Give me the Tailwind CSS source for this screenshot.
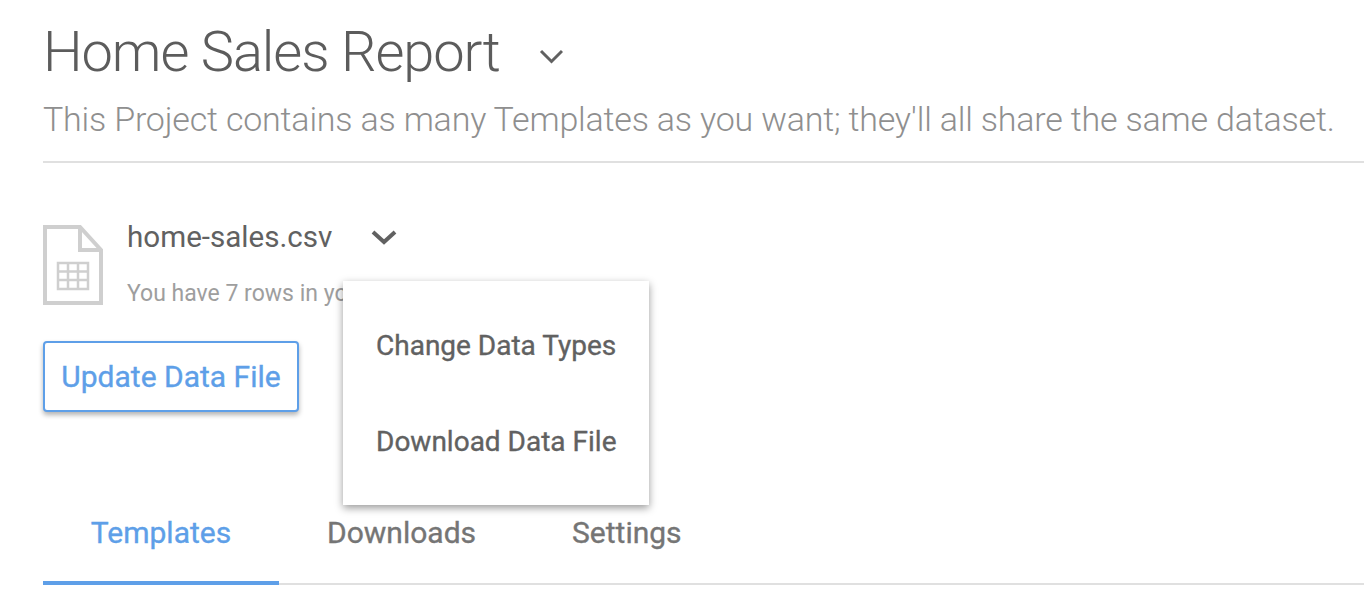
<!DOCTYPE html>
<html lang="en">
<head>
    <meta charset="UTF-8">
    <meta name="viewport" content="width=device-width, initial-scale=1.0">
    <title>Home Sales Report</title>
    <script src="https://cdn.jsdelivr.net/npm/@tailwindcss/browser@4"></script>
</head>
<body class="bg-white font-['Roboto',sans-serif] overflow-hidden">
    <div class="pl-[43px] h-[605px] w-[1364px] overflow-hidden">
        <div class="flex items-center h-[48px] mt-[28px]">
            <h1 class="text-[56px] leading-[48px] font-light text-[#5c5c5c] tracking-[-1.1px]">Home Sales Report</h1>
            <svg class="ml-[39px] mt-[7px]" width="24" height="16" viewBox="0 0 24 16" fill="none" stroke="#616161" stroke-width="3"><path d="M2 3l10.5 10.5L23 3"/></svg>
        </div>
        <p class="mt-[23px] text-[34px] leading-[40px] font-light text-[#8f8f8f] tracking-[-0.19px] whitespace-nowrap">This Project contains as many Templates as you want; they'll all share the same dataset.</p>
        <div class="mt-[22px] h-[2px] bg-[#e0e0e0]"></div>

        <div class="relative">
            <div class="flex pt-[62px]">
                <svg width="60" height="80" viewBox="0 0 60 80" fill="none" stroke="#cfcfcf" stroke-width="4">
                    <path d="M2 2H37L58 25V78H2Z"/>
                    <path d="M37 2V25H58"/>
                    <path stroke-width="2.5" d="M15 38H45V64H15ZM15 46.5H45M15 55H45M25 38V64M35 38V64"/>
                </svg>
                <div class="ml-[24px]">
                    <div class="flex items-center h-[32px] -mt-[4px]">
                        <span class="text-[29.6px] leading-[32px] text-[#616161]">home-sales.csv</span>
                        <svg class="ml-[39px]" width="26" height="16" viewBox="0 0 26 16" fill="none" stroke="#616161" stroke-width="4"><path d="M2 3l11 10L24 3"/></svg>
                    </div>
                    <p class="mt-[27px] text-[23px] leading-[28px] text-[#9e9e9e] whitespace-nowrap">You have 7 rows in your data file.</p>
                </div>
            </div>

            <button class="mt-[33px] block h-[71px] w-[256px] rounded-[4px] border-2 border-[#5e9fe8] bg-white text-[#5e9fe8] text-[30px] font-normal [-webkit-text-stroke:0.35px] shadow-[0_3px_5px_rgba(0,0,0,0.3)]">Update Data File</button>

            <div class="absolute z-10 left-[300px] top-[118px] w-[306px] h-[224px] bg-white shadow-[0_3px_8px_rgba(0,0,0,0.4)] pt-[17px] text-[#616161] text-[28px] font-normal [-webkit-text-stroke:0.35px]">
                <div class="h-[96px] flex items-center pl-[33px]">Change Data Types</div>
                <div class="h-[96px] flex items-center pl-[33px]">Download Data File</div>
            </div>

            <div class="mt-[70px] flex border-b-2 border-[#e0e0e0] h-[103px] text-[30px] font-normal [-webkit-text-stroke:0.35px]">
                <div class="w-[236px] flex justify-center items-center text-[#5e9fe8] border-b-4 border-[#5e9fe8] -mb-[2px] pt-[1px]">Templates</div>
                <div class="ml-[48px] flex items-center text-[#757575]">Downloads</div>
                <div class="ml-[96px] flex items-center text-[#757575]">Settings</div>
            </div>
        </div>
    </div>
</body>
</html>
